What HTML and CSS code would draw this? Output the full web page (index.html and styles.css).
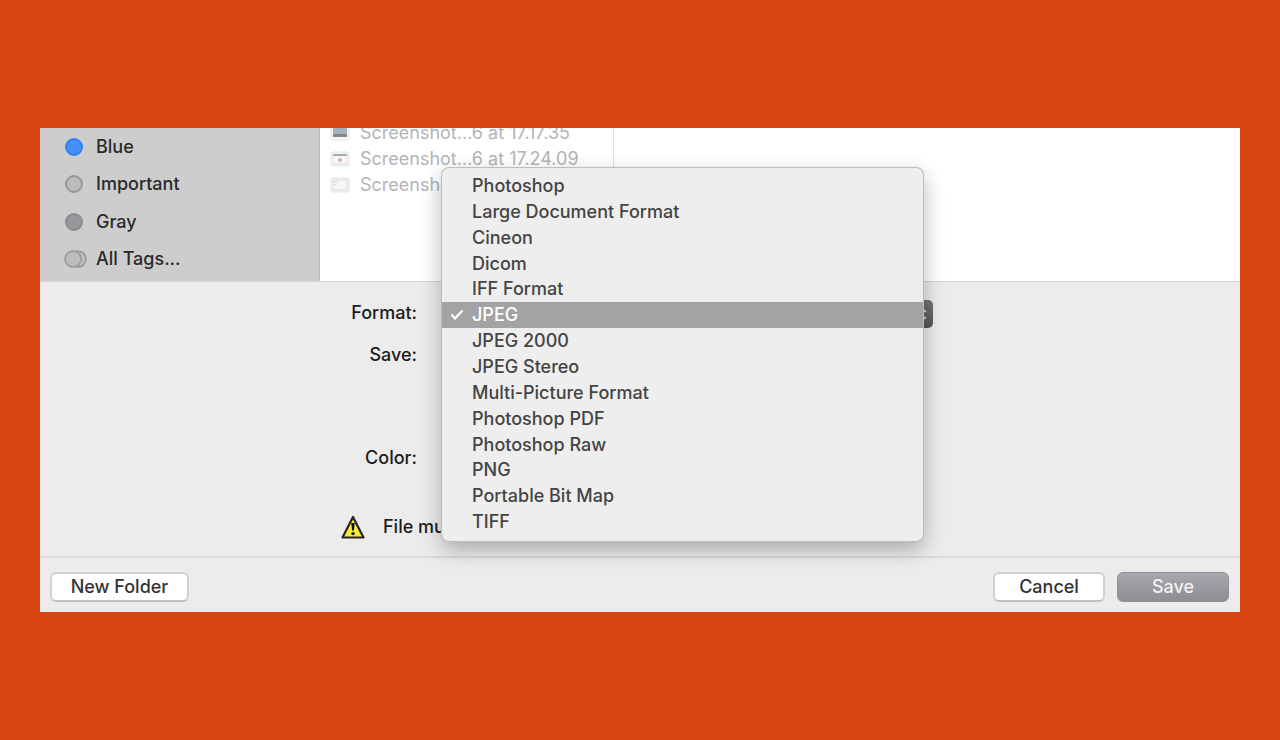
FILE: index.html
```
<!DOCTYPE html>
<html lang="en">
<head>
  <meta charset="UTF-8" />
  <meta name="viewport" content="width=device-width, initial-scale=1.0" />
  <title>Save As</title>
  <link rel="stylesheet" href="styles.css">
</head>
<body>
  <main class="dialog">
    <section class="browser">
      <ul class="sidebar">
        <li><span class="tag blue"></span>Blue</li>
        <li><span class="tag"></span>Important</li>
        <li><span class="tag gray"></span>Gray</li>
        <li>
          <svg class="all-tags" viewBox="0 0 23 18"><g fill="#bcbcbc" stroke="#979797" stroke-width="1.5"><circle cx="14" cy="9" r="8"/><circle cx="9" cy="9" r="8"/></g></svg>
          All Tags...
        </li>
      </ul>
      <ul class="files">
        <li>
          <svg class="thumb" viewBox="0 0 20 16"><rect x="1" y="1" width="18" height="14" rx="2" fill="#f6f6f6" stroke="#e4e4e4"/><rect x="3" y="3" width="14" height="9" fill="#a5b0bf"/><path d="M3 9h14v3H3z" fill="#85858a"/></svg>
          Screenshot...6 at 17.17.35
        </li>
        <li>
          <svg class="thumb" viewBox="0 0 20 16"><rect x="1" y="1" width="18" height="14" rx="2" fill="#f8f8f8" stroke="#e4e4e4"/><path d="M3 4h14" stroke="#aaa" stroke-width="2"/><path d="M3 5v8h14V5" fill="none" stroke="#ddd"/><circle cx="10" cy="9" r="2" fill="#dfa8c8"/></svg>
          Screenshot...6 at 17.24.09
        </li>
        <li>
          <svg class="thumb" viewBox="0 0 20 16"><rect x="1" y="1" width="18" height="14" rx="2" fill="#f6f6f6" stroke="#e4e4e4"/><rect x="3" y="3" width="14" height="10" fill="#f8f8f8" stroke="#dadada"/><path d="M4 5h3M4 8h2" stroke="#c8c8c8"/></svg>
          Screenshot...
        </li>
      </ul>
    </section>

    <form class="options">
      <label for="format">Format:</label>
      <div class="field">
        <select id="format">
          <option>JPEG</option>
        </select>
        <svg class="arrows" viewBox="0 0 28 28"><path d="M11 12l5-4 5 4M11 17l5 4 5-4" fill="none" stroke="#d0d0d0" stroke-width="2"/></svg>
        <div class="menu" role="menu">
          <button type="button" role="menuitem">Photoshop</button>
          <button type="button" role="menuitem">Large Document Format</button>
          <button type="button" role="menuitem">Cineon</button>
          <button type="button" role="menuitem">Dicom</button>
          <button type="button" role="menuitem">IFF Format</button>
          <button type="button" role="menuitem" class="selected">
            <svg class="check" viewBox="0 0 14 12"><path d="M1.5 5.5l3.5 4L12.500 1.500" fill="none" stroke="#fff" stroke-width="2.2"/></svg>JPEG
          </button>
          <button type="button" role="menuitem">JPEG 2000</button>
          <button type="button" role="menuitem">JPEG Stereo</button>
          <button type="button" role="menuitem">Multi-Picture Format</button>
          <button type="button" role="menuitem">Photoshop PDF</button>
          <button type="button" role="menuitem">Photoshop Raw</button>
          <button type="button" role="menuitem">PNG</button>
          <button type="button" role="menuitem">Portable Bit Map</button>
          <button type="button" role="menuitem">TIFF</button>
        </div>
      </div>
      <span class="name">Save:</span>
      <span class="name">Color:</span>
      <p class="warning">
        <svg viewBox="0 0 24 24"><path d="M12 2L22.5 22.5h-21z" fill="#f5ed35" stroke="#2a2424" stroke-width="2.2" stroke-linejoin="round"/><path d="M10.3 8h3.4l-.8 7.5h-1.8z" fill="#111"/><circle cx="12" cy="18.6" r="1.7" fill="#111"/></svg>
        File must
      </p>
    </form>

    <footer class="actions">
      <button type="button" class="new-folder">New Folder</button>
      <button type="button" class="cancel">Cancel</button>
      <button type="button" class="save">Save</button>
    </footer>
  </main>
</body>
</html>
```
FILE: styles.css
```
* {
  box-sizing: border-box;
}
body {
  background-color: #d84513;
  color: #2a2a2a;
  font-family: Inter, "Liberation Sans", sans-serif;
  font-size: 18px;
  line-height: 24px;
  margin: 0;
  padding: 0 40px;
  min-height: 100vh;
  display: flex;
  align-items: center;
}
ul {
  list-style: none;
  margin: 0;
  padding: 0;
}
button, select {
  font: inherit;
}
.dialog {
  width: 100%;
  background-color: #ececec;
}

/* tags and files */
.browser {
  display: flex;
  height: 154px;
  background-color: white;
  border-bottom: 1px solid #d4d4d4;
  overflow: hidden;
}
.sidebar {
  display: flex;
  flex-direction: column;
  flex: 0 0 280px;
  background-color: #cdcdcd;
  border-right: 1px solid #b8b8b8;
  padding: 0 0 3px 25px;
  font-weight: 500;
}
.sidebar li {
  flex: 1;
  display: flex;
  align-items: center;
  gap: 13px;
}
.tag {
  width: 18px;
  height: 18px;
  border-radius: 50%;
  background-color: #bcbcbc;
  border: 2px solid #979797;
}
.tag.blue {
  background-color: #458ff7;
  border-color: #2f80f2;
}
.tag.gray {
  background-color: #98989c;
  border-color: #8b8b8f;
}
.all-tags {
  width: 23px;
  height: 18px;
  margin: 0 -4px 0 -1px;
}
.files {
  flex: 0 0 294px;
  margin-top: -8px;
  padding-left: 10px;
  border-right: 1px solid #e0e0e0;
  color: #b4b4b4;
}
.files li {
  display: flex;
  align-items: center;
  gap: 10px;
  height: 26px;
  white-space: nowrap;
}
.thumb {
  width: 20px;
  height: 16px;
}

/* format options */
.options {
  display: grid;
  grid-template-columns: 377px 491px;
  grid-template-rows: 28px 89px 56px 24px;
  row-gap: 14px;
  column-gap: 25px;
  padding: 18px 0 17px;
  color: #1c1c1c;
  font-weight: 500;
}
.options label, .name {
  grid-column: 1;
  padding-top: 1px;
  text-align: right;
}
.field {
  position: relative;
}
.field select {
  display: block;
  appearance: none;
  width: 100%;
  height: 28px;
  padding: 0 10px;
  border: none;
  border-radius: 5px;
  background: linear-gradient(#737378, #55555a) right / 28px 28px no-repeat white;
}
.arrows {
  position: absolute;
  right: 0;
  top: 0;
  width: 28px;
  height: 28px;
  pointer-events: none;
}
.menu {
  position: absolute;
  left: 0;
  top: -132px;
  z-index: 1;
  display: flex;
  flex-direction: column;
  width: 481px;
  height: 373px;
  padding: 5px 0 6px;
  background-color: #eeeeee;
  border-radius: 7px;
  box-shadow: 0 0 0 1px #bdbdbd, 0 8px 22px rgba(0, 0, 0, 0.3);
}
.menu button {
  flex: 1;
  display: flex;
  align-items: center;
  padding: 0 30px;
  background: none;
  border: none;
  color: #444;
  font-weight: 500;
}
.menu .selected {
  padding-left: 8px;
  gap: 8px;
  background-color: #a3a3a3;
  color: white;
}
.check {
  width: 14px;
  height: 12px;
}
.warning {
  grid-column: 1 / -1;
  display: flex;
  align-items: center;
  gap: 18px;
  margin: 0;
  padding-left: 301px;
  white-space: nowrap;
}
.warning svg {
  width: 24px;
  height: 24px;
}

/* bottom buttons */
.actions {
  display: flex;
  gap: 12px;
  padding: 14px 11px 10px 10px;
  border-top: 2px solid #dadada;
}
.actions button {
  width: 112px;
  height: 30px;
  padding: 0;
  border: 2px solid #d0d0d0;
  border-bottom-color: #c2c2c2;
  border-radius: 6px;
  background-color: white;
  color: #333;
  font-weight: 500;
}
.actions .new-folder {
  width: 139px;
  margin-right: auto;
}
.actions .save {
  background: linear-gradient(#a9a8ae, #8d8c93) border-box;
  border: 1px solid #929197;
  color: #f2f2f2;
}
```
